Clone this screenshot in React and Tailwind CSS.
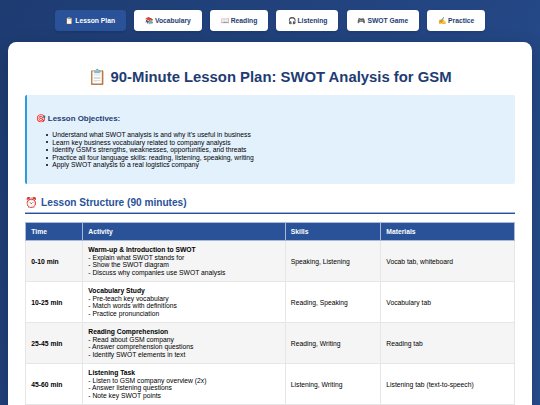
import React, { useState } from "react";

const tabs = [
  { id: "lesson", icon: "📋", label: "Lesson Plan", width: "w-[71px]" },
  { id: "vocabulary", icon: "📚", label: "Vocabulary", width: "w-[67.6px]" },
  { id: "reading", icon: "📖", label: "Reading", width: "w-[58px]" },
  { id: "listening", icon: "🎧", label: "Listening", width: "w-[62px]" },
  { id: "game", icon: "🎮", label: "SWOT Game", width: "w-[72px]" },
  { id: "practice", icon: "✍️", label: "Practice", width: "w-[58px]" },
];

const objectives = [
  "Understand what SWOT analysis is and why it's useful in business",
  "Learn key business vocabulary related to company analysis",
  "Identify GSM's strengths, weaknesses, opportunities, and threats",
  "Practice all four language skills: reading, listening, speaking, writing",
  "Apply SWOT analysis to a real logistics company",
];

const schedule = [
  {
    time: "0-10 min",
    title: "Warm-up & Introduction to SWOT",
    steps: ["Explain what SWOT stands for", "Show the SWOT diagram", "Discuss why companies use SWOT analysis"],
    skills: "Speaking, Listening",
    materials: "Vocab tab, whiteboard",
  },
  {
    time: "10-25 min",
    title: "Vocabulary Study",
    steps: ["Pre-teach key vocabulary", "Match words with definitions", "Practice pronunciation"],
    skills: "Reading, Speaking",
    materials: "Vocabulary tab",
  },
  {
    time: "25-45 min",
    title: "Reading Comprehension",
    steps: ["Read about GSM company", "Answer comprehension questions", "Identify SWOT elements in text"],
    skills: "Reading, Writing",
    materials: "Reading tab",
  },
  {
    time: "45-60 min",
    title: "Listening Task",
    steps: ["Listen to GSM company overview (2x)", "Answer listening questions", "Note key SWOT points"],
    skills: "Listening, Writing",
    materials: "Listening tab (text-to-speech)",
  },
];

const App = () => {
  const [active, setActive] = useState("lesson");

  return (
    <div className="h-screen overflow-hidden flex flex-col bg-linear-to-br from-[#1e3c72] to-[#2a5298] bg-[length:100%_800px] px-[8.4px] pt-[10.3px] font-['Liberation_Sans',Arial,sans-serif] text-[6.75px] leading-[7.65px] text-black">
      {/* TABS */}
      <nav className="flex shrink-0 justify-center gap-[8.4px] mb-[10.2px]">
        {tabs.map((tab) => (
          <button
            key={tab.id}
            onClick={() => setActive(tab.id)}
            className={`${tab.width} h-[21.2px] shrink-0 rounded-[3.4px] font-semibold whitespace-nowrap cursor-pointer shadow-[0_1.7px_2.5px_rgba(0,0,0,0.1)]
            ${active === tab.id ? "bg-[#2a5298] text-white" : "bg-white text-[#1e3c72]"}`}
          >
            {tab.icon} {tab.label}
          </button>
        ))}
      </nav>

      {/* CONTENT */}
      <main className="flex-1 bg-white rounded-t-[8.4px] px-[16.9px] pt-[27.4px] shadow-[0_4px_17px_rgba(0,0,0,0.2)]">
        <h1 className="h-[17px] leading-[17px] text-center text-[14.85px] font-bold text-[#1e3c72]">
          📋 90-Minute Lesson Plan: SWOT Analysis for GSM
        </h1>

        <section className="mt-[8.8px] h-[88.8px] rounded-[2px] border-l-2 border-[#2e9bdb] bg-[#e3f1fd] pl-[8.4px] pt-[19px]">
          <h3 className="h-[9px] leading-[9px] text-[7.9px] font-bold text-[#1e3c72]">🎯 Lesson Objectives:</h3>
          <ul className="mt-[8px] pl-[10px]">
            {objectives.map((item) => (
              <li key={item} className="flex items-center gap-[4.7px] before:size-[2px] before:rounded-full before:bg-black before:content-['']">
                {item}
              </li>
            ))}
          </ul>
        </section>

        <h2 className="mt-[13px] h-[17px] leading-[12px] border-b border-[#2a5298] text-[10.12px] font-bold text-[#2a5298] shadow-[0_-1px_0_#9db3dc_inset]">
          ⏰ Lesson Structure (90 minutes)
        </h2>

        <table className="mt-[8.4px] w-full table-fixed border-collapse">
          <colgroup>
            <col className="w-[57px]" />
            <col className="w-[202.5px]" />
            <col className="w-[95.5px]" />
            <col />
          </colgroup>
          <thead>
            <tr className="h-[18.4px] bg-[#2a5298] text-left text-white">
              {["Time", "Activity", "Skills", "Materials"].map((head) => (
                <th key={head} className="border border-[#a9b9d6] px-[5px] py-0 font-bold">{head}</th>
              ))}
            </tr>
          </thead>
          <tbody>
            {schedule.map((row) => (
              <tr key={row.time} className="h-[41px] odd:bg-[#f5f5f5]">
                <td className="border border-[#e6e6e6] px-[5px] py-0 font-bold">{row.time}</td>
                <td className="border border-[#e6e6e6] px-[5px] py-0">
                  <strong>{row.title}</strong>
                  {row.steps.map((step) => (
                    <div key={step}>- {step}</div>
                  ))}
                </td>
                <td className="border border-[#e6e6e6] px-[5px] py-0">{row.skills}</td>
                <td className="border border-[#e6e6e6] px-[5px] py-0">{row.materials}</td>
              </tr>
            ))}
            <tr className="h-[41px] bg-[#f5f5f5]">
              <td className="border border-[#e6e6e6]" colSpan={4} />
            </tr>
          </tbody>
        </table>
      </main>
    </div>
  );
};

export default App;
